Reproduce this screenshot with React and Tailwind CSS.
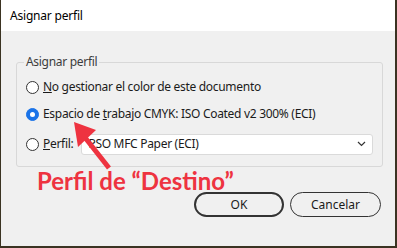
import React from 'react';

const Radio = ({ checked }) => (
  <span
    className={`inline-flex items-center justify-center w-[13px] h-[13px] rounded-full border shrink-0 ${
      checked ? 'border-[#1a73e8] bg-[#1a73e8]' : 'border-[#333] bg-white'
    }`}
  >
    {checked && <span className="w-[5px] h-[5px] rounded-full bg-white" />}
  </span>
);

const App = () => {
  return (
    <div className="w-[397px] h-[248px] bg-[#3b3322] overflow-hidden" style={{ fontFamily: '"Noto Sans", sans-serif' }}>
      <div className="relative ml-px w-[394px] h-[246px] bg-[#f0f0f0] flex flex-col">
        {/* barra de titulo */}
        <div className="h-[31px] bg-white flex items-center pl-[9px] text-[12px] text-black tracking-[-0.2px]">Asignar perfil</div>

        <div className="flex-1 px-[15px] pt-[22px] tracking-[-0.3px]">
          <fieldset className="border border-[#d8d8d8] rounded-[3px] h-[114px] w-[365px] px-[9px] pt-[9px]">
            <legend className="px-[2px] ml-[-2px] text-[12px] text-[#3c3c3c]">Asignar perfil</legend>
            <div className="flex flex-col gap-[13px] text-[12px] text-[#1b1b1b]">
              <label className="flex items-center gap-[4px] h-[14px]">
                <Radio />
                <span><span className="underline">N</span>o gestionar el color de este documento</span>
              </label>
              <label className="flex items-center gap-[4px] h-[14px]">
                <Radio checked />
                <span>Espacio de <span className="underline">t</span>rabajo CMYK: ISO Coated v2 300% (ECI)</span>
              </label>
              <div className="flex items-center gap-[4px] h-[20px]">
                <Radio />
                <span><span className="underline">P</span>erfil:</span>
                <div className="ml-[4px] w-[292px] h-[21px] bg-white border border-[#dadada] rounded-[3px] flex items-center justify-between pl-[6px] pr-[6px]">
                  <span>PSO MFC Paper (ECI)</span>
                  <svg width="9" height="6" viewBox="0 0 9 6"><path d="M1 1l3.5 3.5L8 1" fill="none" stroke="#333" strokeWidth="1.2" /></svg>
                </div>
              </div>
            </div>
          </fieldset>

          <div className="h-[24px] mt-[2px] tracking-normal">
            <span className="ml-[21px] text-[24px] leading-[24px] font-bold text-[#ee3340]" style={{ fontFamily: 'Lato, sans-serif' }}>
              Perfil de “Destino”
            </span>
          </div>

          <div className="flex justify-end gap-[6px] mt-[-1px] mr-[-1px] tracking-normal">
            <button className="w-[90px] h-[25px] rounded-full border-2 border-[#333] text-[12px] text-[#1b1b1b]">OK</button>
            <button className="w-[91px] h-[25px] rounded-full border border-[#333] text-[12px] text-[#1b1b1b]">Cancelar</button>
          </div>
        </div>

        {/* flecha roja */}
        <svg className="absolute left-0 top-0 pointer-events-none" width="394" height="246">
          <line x1="108" y1="168" x2="82" y2="135" stroke="#ee3340" strokeWidth="5" />
          <polygon points="73,122 95,130 77,147" fill="#ee3340" />
        </svg>
      </div>
    </div>
  );
};

export default App;
